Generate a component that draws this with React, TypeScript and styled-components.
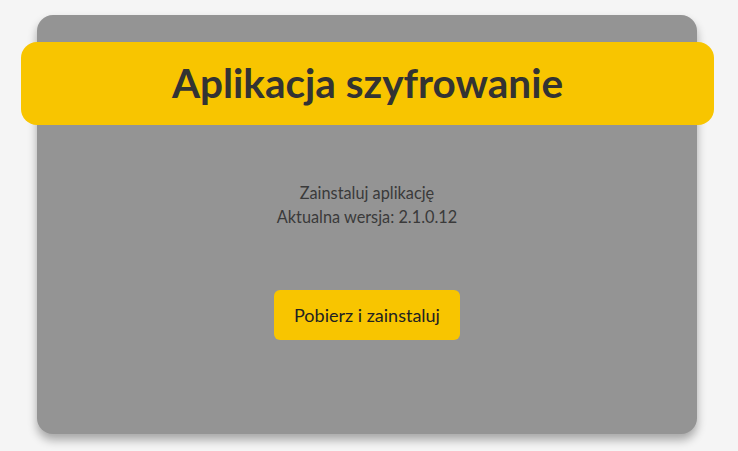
import * as React from 'react';
import styled, { createGlobalStyle } from 'styled-components';

const GlobalStyle = createGlobalStyle`
  html, body {
    margin: 0;
    padding: 0;
    background: #f5f5f5;
    font-family: Lato, "Open Sans", "Liberation Sans", sans-serif;
  }
`;

const Page = styled.div`
  padding: 15px 0 0 37px;
  height: 451px;
  box-sizing: border-box;
`;

const Card = styled.div`
  width: 660px;
  height: 419px;
  box-sizing: border-box;
  padding-top: 27px;
  background: #949494;
  border-radius: 16px;
  box-shadow: 0 6px 10px rgba(0, 0, 0, 0.32);
  display: flex;
  flex-direction: column;
  align-items: center;
`;

const Header = styled.div`
  align-self: stretch;
  margin: 0 -17px 0 -16px;
  height: 83px;
  background: #f8c500;
  border-radius: 16px;
  display: flex;
  align-items: center;
  justify-content: center;
`;

const Title = styled.h1`
  margin: 0 0 2px;
  font-size: 40.5px;
  font-weight: 700;
  color: #333333;
`;

const Info = styled.div`
  margin-top: 56px;
  text-align: center;
  font-size: 16.3px;
  line-height: 24px;
  color: #3a3a3a;
`;

const Button = styled.button`
  margin-top: 61px;
  width: 186px;
  height: 50px;
  border: none;
  border-radius: 6px;
  background: #f8c500;
  color: #222222;
  font-family: inherit;
  font-size: 18px;
  cursor: pointer;
`;

export default function App() {
    return (
        <Page>
            <GlobalStyle />
            <Card>
                <Header>
                    <Title>Aplikacja szyfrowanie</Title>
                </Header>
                <Info>
                    <div>Zainstaluj aplikację</div>
                    <div>Aktualna wersja: 2.1.0.12</div>
                </Info>
                <Button>Pobierz i zainstaluj</Button>
            </Card>
        </Page>
    );
}
